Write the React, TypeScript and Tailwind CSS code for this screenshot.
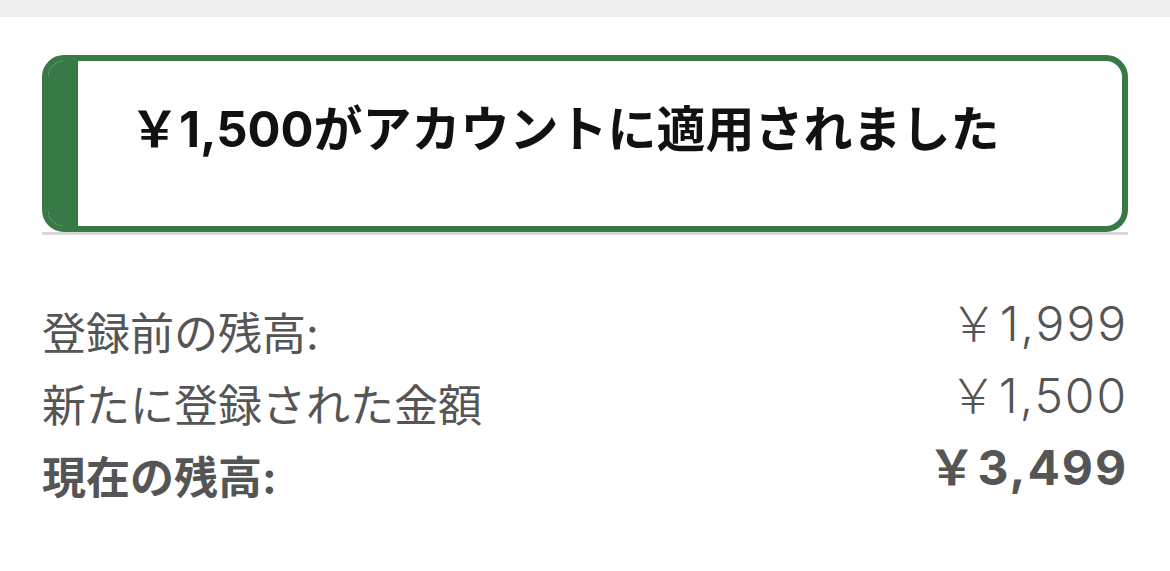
const rows = [
  { label: '登録前の残高:', amount: '￥1,999', strong: false },
  { label: '新たに登録された金額', amount: '￥1,500', strong: false },
  { label: '現在の残高:', amount: '￥3,499', strong: true },
];

export default function App() {
  return (
    <div
      className="min-h-[571px] bg-white"
      style={{ fontFamily: 'Inter, "Noto Sans CJK JP", sans-serif' }}
    >
      <div className="h-[17px] bg-[#efefef]" />

      <div className="px-[42px] pt-[38px]">
        <div className="flex h-[177px] overflow-hidden rounded-[22px] border-[6px] border-[#387a46]">
          <div className="w-[30px] shrink-0 bg-[#387a46]" />
          <div className="pl-[52px] pt-[38px]">
            <h1 className="text-[49px] font-bold leading-[62px] text-[#111111]">
              ￥1,500がアカウントに適用されました
            </h1>
          </div>
        </div>
        <div className="h-[3px] bg-[#d9d9d9]" />

        <dl className="mt-[63px] text-[#555555]">
          {rows.map((row) => (
            <div
              key={row.label}
              className={`flex items-start justify-between ${
                row.strong ? 'font-bold' : 'font-normal'
              }`}
            >
              <dt className="text-[44px] leading-[72px]">{row.label}</dt>
              <dd
                className={`text-[48px] leading-[52px] tracking-[0.04em] ${
                  row.strong ? '' : 'font-light'
                }`}
              >
                {row.amount}
              </dd>
            </div>
          ))}
        </dl>
      </div>
    </div>
  );
}
